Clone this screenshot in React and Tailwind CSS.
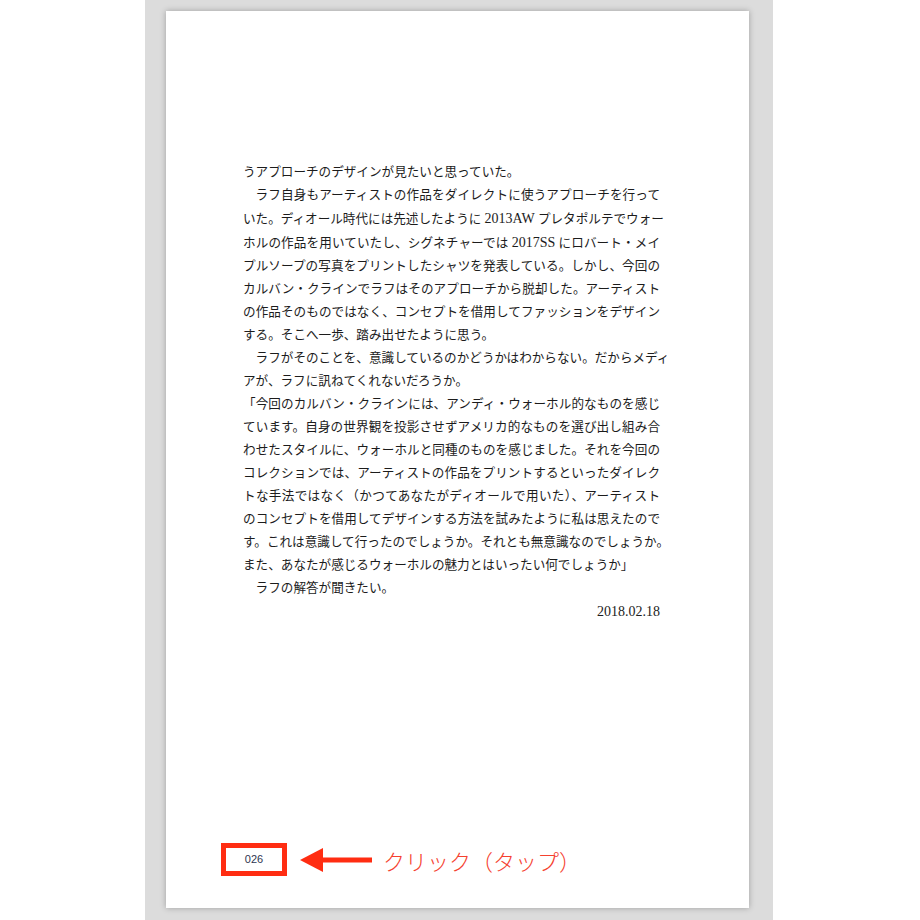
export default function App() {
  const lines = [
    { t: "うアプローチのデザインが見たいと思っていた。", end: true },
    { t: "ラフ自身もアーティストの作品をダイレクトに使うアプローチを行って", indent: true },
    { t: ["いた。ディオール時代には先述したように ", "2013AW", " プレタポルテでウォー"] },
    { t: ["ホルの作品を用いていたし、シグネチャーでは ", "2017SS", " にロバート・メイ"] },
    { t: "プルソープの写真をプリントしたシャツを発表している。しかし、今回の" },
    { t: "カルバン・クラインでラフはそのアプローチから脱却した。アーティスト" },
    { t: "の作品そのものではなく、コンセプトを借用してファッションをデザイン" },
    { t: "する。そこへ一歩、踏み出せたように思う。", end: true },
    { t: "ラフがそのことを、意識しているのかどうかはわからない。だからメディ", indent: true },
    { t: "アが、ラフに訊ねてくれないだろうか。", end: true },
    { t: "「今回のカルバン・クラインには、アンディ・ウォーホル的なものを感じ" },
    { t: "ています。自身の世界観を投影させずアメリカ的なものを選び出し組み合" },
    { t: "わせたスタイルに、ウォーホルと同種のものを感じました。それを今回の" },
    { t: "コレクションでは、アーティストの作品をプリントするといったダイレク" },
    { t: "トな手法ではなく（かつてあなたがディオールで用いた）、アーティスト" },
    { t: "のコンセプトを借用してデザインする方法を試みたように私は思えたので" },
    { t: "す。これは意識して行ったのでしょうか。それとも無意識なのでしょうか。" },
    { t: "また、あなたが感じるウォーホルの魅力とはいったい何でしょうか」", end: true },
    { t: "ラフの解答が聞きたい。", indent: true, end: true },
  ];

  return (
    <div className="w-full h-[920px] bg-white overflow-hidden">
      <div className="ml-[145px] w-[628px] h-[920px] bg-[#dcdcdc] pt-[11px] pl-[21px]">

        {/* PAGE */}
        <div className="w-[583px] h-[897px] bg-white shadow-[0_0_6px_rgba(0,0,0,0.28)] flex flex-col pt-[150px]">

          <div
            lang="ja"
            className="ml-[77px] w-[417px] text-[12.6px] leading-[23px] text-[#1c1c1c] font-['Liberation_Serif','Noto_Sans_CJK_JP',serif]"
          >
            {
              lines.map((line, index) => (
                <div
                  key={index}
                  className={
                    (line.end ? "text-left " : "text-justify [text-align-last:justify] ") +
                    (line.indent ? "pl-[1em] " : "") +
                    "whitespace-nowrap"
                  }
                >
                  {
                    Array.isArray(line.t) ? (
                      <>
                        {line.t[0]}
                        <span className="text-[14px]">{line.t[1]}</span>
                        {line.t[2]}
                      </>
                    ) : (
                      line.t
                    )
                  }
                </div>
              ))
            }
            <div className="text-right text-[14px]">2018.02.18</div>
          </div>

          {/* FOOTER */}
          <div className="mt-auto mb-[32px] ml-[55px] flex items-center">

            <div className="w-[66px] h-[33px] border-[5px] border-[#ff2d12] flex items-center justify-center text-[11px] text-[#2e3550] font-['Liberation_Sans',sans-serif]">
              026
            </div>

            <svg width="72" height="26" viewBox="0 0 72 26" className="ml-[13px]">
              <polygon points="0,13 23,1 23,25" fill="#ff2d12" />
              <rect x="22" y="10.5" width="50" height="5" fill="#ff2d12" />
            </svg>

            <span className="ml-[11px] text-[22px] leading-none text-[#f5412f] font-['Noto_Sans_CJK_JP',sans-serif] font-light">
              クリック（タップ）
            </span>

          </div>

        </div>

      </div>
    </div>
  );
}
